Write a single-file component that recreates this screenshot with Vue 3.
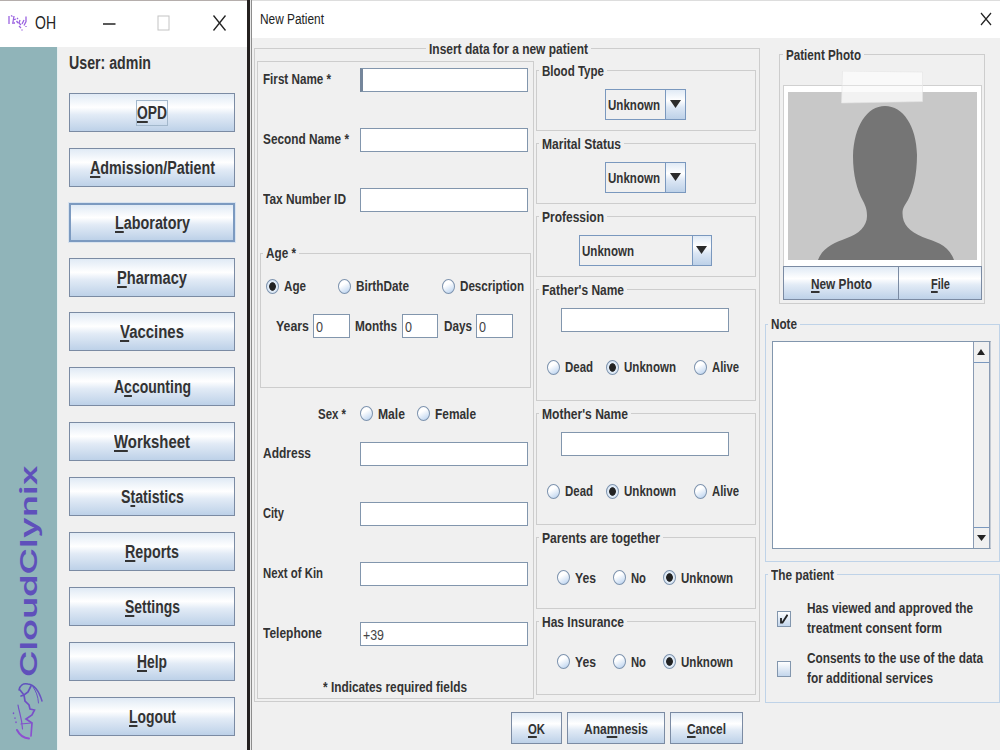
<template>
    <div class="desktop">
        <div class="menu-window">
            <div class="menu-title">
                <svg class="app-icon" width="20" height="18" viewBox="0 0 20 18">
                    <path d="M1 2v8M3 1.500l1.500 1M6 2l-1 6M5 6l3-1M4 9h3M9 4l1 1M8.500 7l1.500 2M12 6l-1 3 2 2M11 12l2 2M14 10l2-4M18 2.500v5l-2 4M13.500 16h1M18 12v1" fill="none" stroke="#9a62e0" stroke-width="1.300" />
                </svg>
                <span class="app-name" v-fit="21">OH</span>
                <svg class="controls" width="124" height="20" viewBox="0 0 124 20">
                    <path d="M0 11h12.500" stroke="#222" stroke-width="1.500" />
                    <rect x="55" y="3" width="11" height="14" fill="none" stroke="#c4c4c4" />
                    <path d="M110.500 2.500l12 15M122.500 2.500l-12 15" stroke="#222" stroke-width="1.300" />
                </svg>
            </div>
            <div class="menu-body">
                <div class="brand">
                    <svg width="57" height="300" viewBox="0 0 57 300">
                        <defs>
                            <linearGradient id="swirl" gradientUnits="userSpaceOnUse" x1="0" y1="233" x2="0" y2="290">
                                <stop offset="0" stop-color="#5d51bd" />
                                <stop offset="1" stop-color="#9150d2" />
                            </linearGradient>
                        </defs>
                        <text class="brand-name" transform="translate(37 227) rotate(-90)" textLength="212" lengthAdjust="spacingAndGlyphs">CloudClynix</text>
                        <g fill="none" stroke="url(#swirl)" stroke-linecap="round">
                            <path d="M19 240c1-5 4-7 9-6 7 1 11 7 14 17" stroke-width="1.500" />
                            <path d="M33 237c3 4 5 9 5.500 16" stroke-width="1" />
                            <path d="M31 236l-3 6-4 3-3 1M20 240l4 5 1 6 4 4 1 4 4.500 1-2.500 5-6 4 6 4-1 13" stroke-width="1.700" />
                            <path d="M18 255c1 7 4 13 4.500 24M21 274l10-1" stroke-width="1.200" />
                            <path d="M17 280c2 4 6 8 12 8.500" stroke-width="2" />
                            <path d="M13.500 263v.5M16 272v.5M15 268v.2" stroke-width="1.500" />
                        </g>
                    </svg>
                </div>
                <div class="menu-list">
                    <div class="user"><span v-fit="82">User: admin</span></div>
                    <button v-for="item in menu" :key="item.text" class="metal menu-button" :class="item.state">
                        <span class="button-text"><span v-fit="item.width"><template v-for="(part, i) in mnemonic(item.text)" :key="i"><u v-if="i === 1">{{ part }}</u><template v-else>{{ part }}</template></template></span></span>
                    </button>
                </div>
            </div>
        </div>

        <div class="divider"></div>

        <div class="dialog">
            <div class="dialog-title">
                <span v-fit="64">New Patient</span>
                <svg width="12" height="14" viewBox="0 0 12 14">
                    <path d="M1 1l10 12M11 1L1 13" stroke="#222" stroke-width="1.200" />
                </svg>
            </div>
            <div class="dialog-body">
                <fieldset class="data-box">
                    <legend><span v-fit="159">Insert data for a new patient</span></legend>
                    <div class="personal">
                        <div v-for="field in topFields" :key="field.label" class="field-row">
                            <div class="field-label"><span v-fit="field.width">{{ field.label }}</span></div>
                            <div class="input" :class="{ caret: field.caret }"></div>
                        </div>
                        <fieldset class="age-box">
                            <legend><span v-fit="30">Age *</span></legend>
                            <div class="radios age-radios">
                                <div v-for="option in ageModes" :key="option.label" class="option">
                                    <i class="radio" :class="{ on: option.on }"></i>
                                    <span v-fit="option.width">{{ option.label }}</span>
                                </div>
                            </div>
                            <div class="age-values">
                                <template v-for="unit in ageUnits" :key="unit.label">
                                    <span v-fit="unit.width">{{ unit.label }}</span>
                                    <div class="input small"><span v-fit="7">0</span></div>
                                </template>
                            </div>
                        </fieldset>
                        <div class="radios sex-radios">
                            <span v-fit="28">Sex *</span>
                            <div v-for="option in sexes" :key="option.label" class="option">
                                <i class="radio"></i>
                                <span v-fit="option.width">{{ option.label }}</span>
                            </div>
                        </div>
                        <div v-for="field in bottomFields" :key="field.label" class="field-row">
                            <div class="field-label"><span v-fit="field.width">{{ field.label }}</span></div>
                            <div class="input"><span v-if="field.value" v-fit="21">{{ field.value }}</span></div>
                        </div>
                        <div class="required"><span v-fit="144">* Indicates required fields</span></div>
                    </div>
                    <div class="details">
                        <fieldset v-for="box in combos" :key="box.title" class="combo-box">
                            <legend><span v-fit="box.width">{{ box.title }}</span></legend>
                            <div class="combo" :class="{ wide: box.wide }">
                                <div class="combo-value"><span v-fit="52">Unknown</span></div>
                                <div class="combo-arrow">
                                    <svg width="11" height="8" viewBox="0 0 11 8"><path d="M0 0h11L5.500 8z" fill="#2b2b2b" /></svg>
                                </div>
                            </div>
                        </fieldset>
                        <fieldset v-for="box in parents" :key="box.title" class="parent-box">
                            <legend><span v-fit="box.width">{{ box.title }}</span></legend>
                            <div class="input"></div>
                            <div class="radios life-radios">
                                <div v-for="option in lifeStates" :key="option.label" class="option">
                                    <i class="radio" :class="{ on: option.on }"></i>
                                    <span v-fit="option.width">{{ option.label }}</span>
                                </div>
                            </div>
                        </fieldset>
                        <fieldset v-for="box in questions" :key="box.title" class="question-box">
                            <legend><span v-fit="box.width">{{ box.title }}</span></legend>
                            <div class="radios answer-radios">
                                <div v-for="option in answers" :key="option.label" class="option">
                                    <i class="radio" :class="{ on: option.on }"></i>
                                    <span v-fit="option.width">{{ option.label }}</span>
                                </div>
                            </div>
                        </fieldset>
                    </div>
                </fieldset>

                <div class="side">
                    <fieldset class="photo-box">
                        <legend><span v-fit="75">Patient Photo</span></legend>
                        <svg class="photo" width="199" height="195" viewBox="0 0 199 195">
                            <rect x=".5" y="14.500" width="198" height="181" fill="#fff" stroke="#d0d0d0" />
                            <rect x="5" y="21" width="189" height="168" fill="#c8c8c8" />
                            <path d="M102 35c18 0 31.500 20 32 49 0 20-4 36-9 45-3 5-5.500 8-5.500 13 0 12 7 18 20 24 14 5 26 8 31.500 23H35c5-13 16-17 29-22 12-4 20-12 20-22 0-6-1-9-4-15-6-11-10-26-10-45 1-30 14-50 32-50z" fill="#757575" />
                            <path d="M59.500 0l80 1v29.500l-81 1.500z" fill="#fafafa" fill-opacity=".84" stroke="#e4e4e4" stroke-width=".6" />
                            <path d="M59 14.500h80" stroke="#dedede" />
                        </svg>
                        <div class="photo-buttons">
                            <button class="metal"><span v-fit="61"><u>N</u>ew Photo</span></button>
                            <button class="metal"><span v-fit="19"><u>F</u>ile</span></button>
                        </div>
                    </fieldset>
                    <fieldset class="blue note-box">
                        <legend><span v-fit="26">Note</span></legend>
                        <div class="note">
                            <div class="note-text"></div>
                            <div class="scrollbar">
                                <div class="scroll-button"><svg width="8" height="6" viewBox="0 0 8 6"><path d="M4 0l4 6H0z" fill="#222" /></svg></div>
                                <div class="track"></div>
                                <div class="scroll-button"><svg width="9" height="6" viewBox="0 0 9 6"><path d="M0 0h9L4.500 6z" fill="#222" /></svg></div>
                            </div>
                        </div>
                    </fieldset>
                    <fieldset class="blue consent-box">
                        <legend><span v-fit="63">The patient</span></legend>
                        <div v-for="consent in consents" :key="consent.lines[0].text" class="consent">
                            <div class="checkbox">
                                <svg v-if="consent.on" width="8" height="10" viewBox="0 0 8 10"><path d="M1 4v4.500h1.500L7.500.8" fill="none" stroke="#222" stroke-width="1.800" /></svg>
                            </div>
                            <div>
                                <div v-for="line in consent.lines" :key="line.text" class="consent-line"><span v-fit="line.width">{{ line.text }}</span></div>
                            </div>
                        </div>
                    </fieldset>
                </div>
            </div>
            <div class="actions">
                <button class="metal ok"><span v-fit="17"><u>O</u>K</span></button>
                <button class="metal anamnesis"><span v-fit="64">Ana<u>m</u>nesis</span></button>
                <button class="metal cancel"><span v-fit="39"><u>C</u>ancel</span></button>
            </div>
        </div>
    </div>
</template>

<script setup>
// squeezes a label horizontally to the given width in px
const vFit = {
    mounted(el, { value }) {
        el.style.display = 'inline-block';
        const natural = el.getBoundingClientRect().width;
        el.style.transform = `scaleX(${value / natural})`;
        el.style.marginRight = `${value - natural}px`;
    }
};

// "A&ccounting" -> ['A', 'c', 'counting']
const mnemonic = function (text) {
    const at = text.indexOf('&');
    return [text.slice(0, at), text[at + 1], text.slice(at + 2)];
};

const menu = [
    { text: '&OPD', width: 30, state: 'focused' },
    { text: '&Admission/Patient', width: 125 },
    { text: '&Laboratory', width: 75, state: 'hovered' },
    { text: '&Pharmacy', width: 70 },
    { text: '&Vaccines', width: 64 },
    { text: 'A&ccounting', width: 77 },
    { text: '&Worksheet', width: 76 },
    { text: 'S&tatistics', width: 63 },
    { text: '&Reports', width: 54 },
    { text: '&Settings', width: 55 },
    { text: '&Help', width: 30 },
    { text: '&Logout', width: 47 }
];

const topFields = [
    { label: 'First Name *', width: 68, caret: true },
    { label: 'Second Name *', width: 86 },
    { label: 'Tax Number ID', width: 83 }
];
const bottomFields = [
    { label: 'Address', width: 48 },
    { label: 'City', width: 21 },
    { label: 'Next of Kin', width: 60 },
    { label: 'Telephone', width: 59, value: '+39' }
];
const ageModes = [
    { label: 'Age', width: 22, on: true },
    { label: 'BirthDate', width: 53 },
    { label: 'Description', width: 64 }
];
const ageUnits = [
    { label: 'Years', width: 33 },
    { label: 'Months', width: 42 },
    { label: 'Days', width: 28 }
];
const sexes = [
    { label: 'Male', width: 27 },
    { label: 'Female', width: 41 }
];
const combos = [
    { title: 'Blood Type', width: 62 },
    { title: 'Marital Status', width: 79 },
    { title: 'Profession', width: 62, wide: true }
];
const parents = [
    { title: "Father's Name", width: 82 },
    { title: "Mother's Name", width: 86 }
];
const lifeStates = [
    { label: 'Dead', width: 28 },
    { label: 'Unknown', width: 52, on: true },
    { label: 'Alive', width: 27 }
];
const questions = [
    { title: 'Parents are together', width: 118 },
    { title: 'Has Insurance', width: 82 }
];
const answers = [
    { label: 'Yes', width: 21 },
    { label: 'No', width: 15 },
    { label: 'Unknown', width: 52, on: true }
];
const consents = [
    {
        on: true,
        lines: [
            { text: 'Has viewed and approved the', width: 166 },
            { text: 'treatment consent form', width: 135 }
        ]
    },
    {
        lines: [
            { text: 'Consents to the use of the data', width: 176 },
            { text: 'for additional services', width: 126 }
        ]
    }
];
</script>

<style>
body {
    overflow: hidden;
}
</style>

<style scoped>
* {
    box-sizing: border-box;
}
.desktop {
    display: flex;
    width: 1000px;
    height: 750px;
    overflow: hidden;
    background: #f0f0f0;
    color: #333;
    font: bold 15.500px/16px "Liberation Sans", Arial, sans-serif;
}
span {
    white-space: nowrap;
    transform-origin: left center;
}
u {
    text-decoration-thickness: 1.500px;
    text-underline-offset: 2px;
    text-decoration-skip-ink: none;
}
svg {
    display: block;
    flex: none;
}
fieldset {
    min-width: 0;
    margin: 0;
    padding: 0;
    border: 1.500px solid #cdcdcd;
}
legend {
    height: 16px;
    margin-left: 2.500px;
    padding: 0 3px;
    line-height: 16px;
}
.metal {
    display: flex;
    align-items: center;
    justify-content: center;
    margin: 0;
    padding: 0;
    border: 1.500px solid #7b8ba3;
    border-radius: 0;
    background: linear-gradient(#e0eaf5, #fff 36%, #e2ebf6 56%, #bdd1e8);
    color: #333;
    font: inherit;
}

/* main menu window */
.menu-window {
    display: flex;
    flex-direction: column;
    width: 247px;
    background: #f0f0f0;
}
.menu-title {
    display: flex;
    align-items: center;
    height: 47px;
    padding: 0 0 2px 8px;
    border-top: 1px solid #b5aeac;
    background: #fff;
}
.app-name {
    margin-left: 7px;
    color: #222;
    font-size: 18.500px;
    font-weight: normal;
    line-height: 20px;
}
.controls {
    margin-left: 47px;
}
.menu-body {
    display: flex;
    flex: 1;
}
.brand {
    display: flex;
    align-items: flex-end;
    width: 58px;
    border-right: 1px solid #e6eff0;
    background: #90b4b9;
}
.brand-name {
    fill: #5f50bb;
    font: 600 23px Inter, sans-serif;
}
.menu-list {
    display: flex;
    flex-direction: column;
    gap: 15.900px;
    padding: 6px 0 0 11px;
    font-size: 18px;
    line-height: 20px;
}
.user {
    height: 24px;
}
.menu-button {
    width: 166px;
    height: 39px;
}
.menu-button.hovered {
    border: 2.500px solid #7c9ac0;
    outline: 1px solid #d8e3ef;
}
.button-text {
    display: flex;
    padding: 3px 1px;
    margin-top: 1px;
}
.focused .button-text {
    padding: 2px 0;
    border: 1px solid #a3b8cc;
}

.divider {
    width: 5px;
    border-right: 1.500px solid #8d8d8d;
    background: linear-gradient(90deg, #24201f 0 3px, #e8e8e8 3px);
}

/* new patient dialog */
.dialog {
    width: 748px;
}
.dialog-title {
    display: flex;
    align-items: center;
    justify-content: space-between;
    height: 38px;
    padding: 0 8px 2px 8px;
    border-top: 1px solid #ddd;
    background: #fff;
    color: #222;
    font-weight: normal;
}
.dialog-body {
    display: flex;
    align-items: flex-start;
    height: 664px;
    padding: 2.500px 0 0 2px;
}
.data-box {
    display: grid;
    grid-template-columns: 276.500px 220px;
    gap: 2px;
    width: 506px;
    height: 661.500px;
    padding: 0 0 0 2px;
}
.data-box > legend {
    margin: 0 auto;
}
.personal {
    height: 638px;
    margin-top: 4px;
    padding-left: 5px;
    border: 1.500px solid #cdcdcd;
}
.field-row {
    display: flex;
    height: 24px;
    margin-bottom: 36.200px;
}
.personal > .field-row:first-child {
    margin-top: 6px;
}
.field-label {
    width: 96.500px;
    padding-top: 3px;
}
.input {
    display: flex;
    align-items: center;
    width: 168px;
    height: 24px;
    padding: 2px 0 0 2px;
    border: 1.500px solid #8296ad;
    background: #fff;
    color: #444;
    font-weight: normal;
}
.input.caret {
    border-left: 3px solid #75869b;
}
.input.small {
    width: 36.500px;
}
.age-box {
    width: 271.500px;
    height: 142.500px;
    margin: -3px 0 0 -3.500px;
}
.radios,
.option {
    display: flex;
    align-items: center;
}
.option {
    gap: 5px;
}
.radio {
    width: 13px;
    height: 15px;
    border: 1.500px solid #7d93ae;
    border-radius: 50%;
    background: linear-gradient(150deg, #fff 35%, #b5cfee);
}
.radio.on {
    background: radial-gradient(ellipse 3.500px 4.500px, #222 85%, #dfeaf6 105%);
}
.age-radios {
    height: 16px;
    margin: 17px 0 0 5.500px;
}
.age-radios .option:nth-child(2) {
    margin-left: 32px;
}
.age-radios .option:nth-child(3) {
    margin-left: 33px;
}
.age-values {
    display: flex;
    align-items: center;
    margin: 19.500px 0 0 15px;
}
.age-values .input {
    margin: 0 5.500px 0 4.500px;
}
.sex-radios {
    height: 16px;
    margin: 18px 0 20px 54.500px;
}
.sex-radios .option {
    margin-left: 14.500px;
}
.sex-radios .option:last-child {
    margin-left: 12px;
}
.required {
    margin: -3px 0 0 59.500px;
}

.details {
    display: flex;
    flex-direction: column;
    gap: 5px;
    padding-top: 6px;
}
.combo-box {
    height: 68px;
}
.combo {
    display: flex;
    width: 81px;
    height: 31px;
    margin: 10px 0 0 68px;
    border: 1.500px solid #7a98be;
}
.combo.wide {
    width: 133.500px;
    margin-left: 42px;
}
.combo-value {
    display: flex;
    flex: 1;
    align-items: center;
    padding: 1.500px 0 0 2px;
}
.combo-arrow {
    display: flex;
    align-items: center;
    justify-content: center;
    width: 19.500px;
    border-left: 1.500px solid #7a98be;
    background: linear-gradient(#e0eaf5, #fff 36%, #dbe6f4 60%, #bdd1e8);
}
.parent-box {
    height: 119px;
}
.parent-box .input {
    margin: 10px 0 0 24px;
}
.life-radios {
    height: 16px;
    margin: 27.500px 0 0 10.500px;
}
.life-radios .option:nth-child(2) {
    margin-left: 13px;
}
.life-radios .option:nth-child(3) {
    margin-left: 17.500px;
}
.question-box {
    height: 79px;
}
.question-box:last-child {
    height: 81px;
}
.answer-radios {
    height: 16px;
    margin: 24px 0 0 20.500px;
}
.answer-radios .option:nth-child(2) {
    margin-left: 17px;
}
.answer-radios .option:nth-child(3) {
    margin-left: 17px;
}

.side {
    display: flex;
    flex-direction: column;
    margin: 6px 0 0 4.500px;
}
.photo-box {
    width: 206px;
    height: 257.500px;
    margin-left: 14.500px;
    padding-left: 3px;
}
.photo-box legend {
    margin-left: -.500px;
}
.photo {
    margin-top: 8px;
}
.photo-buttons {
    display: flex;
    height: 34px;
    padding-top: .500px;
}
.photo-buttons .metal {
    flex: none;
    width: 116px;
    padding-top: 2px;
}
.photo-buttons .metal:last-child {
    width: 84px;
    margin-left: -1px;
}
.blue {
    width: 235px;
    border-color: #bfd3e8;
}
.note-box {
    height: 245.500px;
    margin-top: 12px;
    padding-left: 6.500px;
}
.note-box legend {
    margin-left: -4.500px;
}
.note {
    display: flex;
    width: 218.500px;
    height: 208px;
    margin-top: 9px;
    border: 1.500px solid #8296ad;
    border-right-color: #c3cad3;
    background: #fff;
}
.note-text {
    flex: 1;
}
.scrollbar {
    display: flex;
    flex-direction: column;
    width: 17px;
    border-right: 1.500px solid #8a9bb3;
    border-left: 1.500px solid #8a9bb3;
    background: #f0f0f0;
}
.scroll-button {
    display: flex;
    align-items: center;
    justify-content: center;
    height: 20px;
}
.track {
    flex: 1;
    border-top: 1.500px solid #7a98be;
    border-bottom: 1.500px solid #7a98be;
}
.consent-box {
    height: 136.500px;
    margin-top: 5px;
    padding-top: 17px;
}
.consent {
    display: flex;
    align-items: center;
    height: 41px;
    margin-bottom: 9px;
    padding-left: 11.500px;
}
.checkbox {
    display: flex;
    align-items: center;
    justify-content: center;
    width: 13.500px;
    height: 16.500px;
    margin: -2px 16px 0 0;
    border: 1.500px solid #8296ad;
    background: linear-gradient(#fff, #c3d6ec);
}
.consent-line {
    height: 20.500px;
}

.actions {
    display: flex;
    gap: 5px;
    padding: 10px 0 0 259px;
}
.actions .metal {
    height: 32px;
    padding-top: 2px;
}
.ok {
    width: 51px;
}
.anamnesis {
    width: 98px;
}
.cancel {
    width: 73px;
}
</style>
